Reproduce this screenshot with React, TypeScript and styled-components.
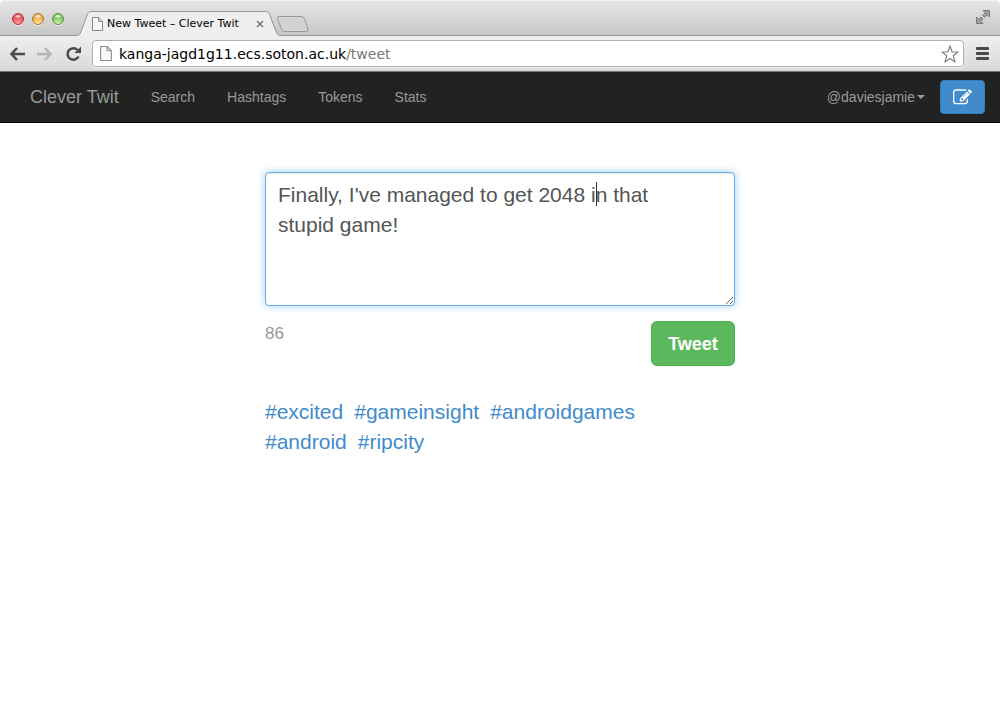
import React, { useState } from "react";
import styled, { createGlobalStyle } from "styled-components";

const GlobalStyle = createGlobalStyle`
  *, *::before, *::after { box-sizing: border-box; }
  body {
    margin: 0;
    background: #fff;
    color: #333;
    font-family: "Liberation Sans", Arial, sans-serif;
    font-size: 14px;
    line-height: 20px;
  }
  svg { display: block; flex: none; }
`;

const Chrome = styled.header`
  font-family: "DejaVu Sans", "Lucida Grande", sans-serif;
  color: #000;
`;

const TabStrip = styled.div`
  display: flex;
  align-items: flex-end;
  height: 36px;
  padding: 0 9px 0 12px;
  border-radius: 5px 5px 0 0;
  border-top: 1px solid #f2f2f2;
  background: linear-gradient(#e6e6e6, #c5c5c5);
  box-shadow: inset 0 -1px #979797;
`;

const Lights = styled.div`
  display: flex;
  gap: 8px;
  align-self: center;
  padding-top: 1px;
`;

const Light = styled.button<{ $edge: string; $fill: string; $glow: string }>`
  width: 12px;
  height: 12px;
  padding: 0;
  border: 1px solid ${(p) => p.$edge};
  border-radius: 50%;
  background:
    radial-gradient(ellipse 4px 2px at 50% 22%, #fff, transparent),
    radial-gradient(circle at 50% 95%, ${(p) => p.$glow}, ${(p) => p.$fill} 75%);
  box-shadow: 0 1px #f0f0f0;
`;

const Tab = styled.div`
  position: relative;
  display: flex;
  align-items: center;
  width: 204px;
  height: 25px;
  margin-left: 12px;
  padding: 0 16px;
  font-size: 11px;
  line-height: 16px;
`;

const TabShape = styled.svg`
  position: absolute;
  inset: 0;
`;

const TabTitle = styled.span`
  position: relative;
  flex: 1;
  margin-left: 4px;
  white-space: nowrap;
`;

const Layer = styled.span`
  position: relative;
`;

const IconButton = styled.button`
  position: relative;
  display: flex;
  flex: none;
  align-items: center;
  justify-content: center;
  padding: 0;
  border: 0;
  background: none;
  color: #4c4c4c;
`;

const NewTab = styled(IconButton)`
  align-self: center;
  margin: 11px 0 0 -4px;
`;

const Expand = styled(IconButton)`
  align-self: center;
  margin: 0 0 4px auto;
`;

const Toolbar = styled.div`
  display: flex;
  align-items: center;
  height: 36px;
  padding: 0 10px 0 9px;
  border-bottom: 1px solid #747474;
  background: linear-gradient(#efefef, #d9d9d9);
`;

const NavButtons = styled.div`
  display: flex;
  gap: 12px;
  margin-right: 10px;
`;

const Omnibox = styled.div`
  display: flex;
  flex: 1;
  align-items: center;
  height: 27px;
  margin-right: 12px;
  padding: 0 4px 0 7px;
  border: 1px solid #b0b0b0;
  border-radius: 4px;
  background: #fff;
  box-shadow: 0 1px #f3f3f3;
`;

const Address = styled.a`
  flex: 1;
  margin-left: 7px;
  color: #777;
  font-size: 14px;
  line-height: 20px;
  text-decoration: none;
  b { color: #000; font-weight: 400; }
`;

const Navbar = styled.nav`
  display: flex;
  gap: 2px;
  align-items: center;
  min-height: 51px;
  padding: 0 15px;
  border-bottom: 1px solid #080808;
  background: #222;
`;

const NavLink = styled.a<{ $brand?: boolean }>`
  display: flex;
  align-items: center;
  padding: 15px;
  color: #999;
  font-size: ${(p) => (p.$brand ? 18 : 14)}px;
  line-height: 20px;
  text-decoration: none;
`;

const NavEnd = styled.div`
  display: flex;
  align-items: center;
  margin-left: auto;
`;

const Caret = styled.span`
  margin-left: 2px;
  border: 4px solid transparent;
  border-top-color: currentColor;
  border-bottom: 0;
`;

const Compose = styled.button`
  display: flex;
  align-items: center;
  justify-content: center;
  width: 45px;
  height: 34px;
  padding: 0;
  border: 1px solid #357ebd;
  border-radius: 4px;
  background: #428bca;
  color: #fff;
`;

const Main = styled.main`
  max-width: 470px;
  margin: 0 auto;
  padding: 49px 0 20px;
`;

const Field = styled.div`
  position: relative;
`;

const TweetBox = styled.textarea`
  display: block;
  width: 100%;
  height: 134px;
  padding: 7px 32px 5px 12px;
  border: 1px solid #66afe9;
  border-radius: 4px;
  outline: 0;
  background: #fff;
  box-shadow: inset 0 1px 1px rgba(0, 0, 0, 0.075), 0 0 8px rgba(102, 175, 233, 0.6);
  color: #555;
  font: 21px/30px "Liberation Sans", Arial, sans-serif;
  resize: vertical;
`;

const InsertionPoint = styled.span`
  position: absolute;
  top: 10px;
  left: 331px;
  width: 1px;
  height: 24px;
  background: #333;
`;

const Actions = styled.div`
  display: flex;
  align-items: flex-start;
  justify-content: space-between;
  margin-top: 15px;
`;

const Remaining = styled.output`
  color: #999;
  font-size: 17px;
  line-height: 26px;
`;

const TweetButton = styled.button`
  width: 84px;
  height: 45px;
  padding: 0;
  border: 1px solid #4cae4c;
  border-radius: 6px;
  background: #5cb85c;
  color: #fff;
  font: bold 18px/24px "Liberation Sans", Arial, sans-serif;
`;

const Suggestions = styled.div`
  display: flex;
  flex-wrap: wrap;
  column-gap: 11px;
  margin-top: 31px;
  padding-right: 32px;
`;

const Hashtag = styled.a`
  color: #428bca;
  font-size: 21px;
  line-height: 30px;
  text-decoration: none;
`;

const PageIcon = ({ width, height }: { width: number; height: number }) => (
  <svg width={width} height={height} viewBox="0 0 11 14" fill="#f8f8f8" stroke="#8a8a8a">
    <path d="M.5.5h6l4 4v9H.5zM6.5.5v4h4" />
  </svg>
);

const lights = [
  { name: "Close window", edge: "#a3383b", fill: "#e2434b", glow: "#ff9d9d" },
  { name: "Minimise window", edge: "#b07532", fill: "#f0a238", glow: "#ffe69a" },
  { name: "Zoom window", edge: "#5b8f47", fill: "#74bd58", glow: "#cff5a8" },
];

const sections = ["Search", "Hashtags", "Tokens", "Stats"];
const hashtags = ["excited", "gameinsight", "androidgames", "android", "ripcity"];

function BrowserChrome() {
  return (
    <Chrome>
      <TabStrip>
        <Lights>
          {lights.map((l) => (
            <Light key={l.name} aria-label={l.name} $edge={l.edge} $fill={l.fill} $glow={l.glow} />
          ))}
        </Lights>
        <Tab>
          <TabShape width="204" height="25" viewBox="0 0 204 25" aria-hidden="true">
            <path
              d="M0 25V24.500C3 24.500 4 23 5 20.500L11 4.500C12 1.500 13 .5 16 .5H189C192 .5 193 1.500 194 4.500L200 20.500C201 23 202 24.500 204 24.500V25Z"
              fill="#efefef"
            />
            <path
              d="M0 24.500C3 24.500 4 23 5 20.500L11 4.500C12 1.500 13 .5 16 .5H189C192 .5 193 1.500 194 4.500L200 20.500C201 23 202 24.500 204 24.500"
              fill="none"
              stroke="#979797"
            />
          </TabShape>
          <Layer>
            <PageIcon width={11} height={14} />
          </Layer>
          <TabTitle>New Tweet – Clever Twit</TabTitle>
          <IconButton aria-label="Close tab">
            <svg width="8" height="8" viewBox="0 0 8 8" stroke="#777" strokeWidth="1.5">
              <path d="M1 1l6 6M7 1l-6 6" />
            </svg>
          </IconButton>
        </Tab>
        <NewTab aria-label="New tab">
          <svg width="33" height="17" viewBox="0 0 33 17" fill="#d3d3d3" stroke="#999">
            <path d="M3 .5H25Q27.500 .5 28.500 3L32 13Q32.500 15.500 30 15.500H9Q6.500 15.500 5.500 13L1.500 3Q1 .5 3 .5Z" />
          </svg>
        </NewTab>
        <Expand aria-label="Enter full screen">
          <svg width="16" height="16" viewBox="0 0 16 16" fill="#a0a0a0" stroke="#7c7c7c">
            <path d="M8 1.500h6.500V8l-2.200-2.200-2.800 2.700-2-2 2.700-2.800zM8 14.500H1.500V8l2.200 2.200 2.300-2.200 2 2-2.200 2.300z" />
          </svg>
        </Expand>
      </TabStrip>
      <Toolbar>
        <NavButtons>
          <IconButton aria-label="Back">
            <svg width="16" height="16" viewBox="0 0 16 16" fill="none" stroke="#4a4a4a" strokeWidth="2.500">
              <path d="M8 2L2.500 8 8 14M2.500 8H16" />
            </svg>
          </IconButton>
          <IconButton aria-label="Forward">
            <svg width="16" height="16" viewBox="0 0 16 16" fill="none" stroke="#b5b5b5" strokeWidth="2.500">
              <path d="M8 2l5.500 6L8 14M13.500 8H0" />
            </svg>
          </IconButton>
          <IconButton aria-label="Reload">
            <svg width="17" height="16" viewBox="0 0 17 16" fill="none" stroke="#4a4a4a" strokeWidth="2.500">
              <path d="M13.500 10.500A5.750 5.750 0 1 1 12.500 4" />
              <path d="M16 .5V7H9.500Z" fill="#4a4a4a" stroke="none" />
            </svg>
          </IconButton>
        </NavButtons>
        <Omnibox>
          <PageIcon width={12} height={15} />
          <Address href="#tweet">
            <b>kanga-jagd1g11.ecs.soton.ac.uk</b>/tweet
          </Address>
          <IconButton aria-label="Bookmark this page">
            <svg width="18" height="18" viewBox="0 0 18 18" fill="#fff" stroke="#858585" strokeWidth="1.250" strokeLinejoin="round">
              <path d="M9 1l2 5.800 6 .2-4.700 3.800 1.700 6.200-5-3.500L4 17l1.700-6.200L1 7l6-.2z" />
            </svg>
          </IconButton>
        </Omnibox>
        <IconButton aria-label="Browser menu">
          <svg width="14" height="13" viewBox="0 0 14 13" fill="#4a4a4a">
            <rect y="0" width="13" height="3" rx="1" />
            <rect y="5" width="13" height="3" rx="1" />
            <rect y="10" width="13" height="3" rx="1" />
          </svg>
        </IconButton>
      </Toolbar>
    </Chrome>
  );
}

export default function App() {
  const [text, setText] = useState("Finally, I've managed to get 2048 in that stupid game!");
  return (
    <>
      <GlobalStyle />
      <BrowserChrome />
      <Navbar>
        <NavLink href="#home" $brand>
          Clever Twit
        </NavLink>
        {sections.map((s) => (
          <NavLink key={s} href={`#${s.toLowerCase()}`}>
            {s}
          </NavLink>
        ))}
        <NavEnd>
          <NavLink href="#account">
            @daviesjamie
            <Caret />
          </NavLink>
          <Compose aria-label="Compose tweet">
            <svg width="19" height="19" viewBox="0 0 1792 1792" fill="currentColor">
              <path d="M888 1184l116-116-152-152-116 116v56h96v96h56zm440-720q-16-16-33 1l-350 350q-17 17-1 33t33-1l350-350q17-17 1-33zm80 594v190q0 119-84.500 203.500t-203.500 84.500h-832q-119 0-203.500-84.500t-84.500-203.500v-832q0-119 84.500-203.500t203.500-84.500h832q63 0 117 25 15 7 18 23 3 17-9 29l-49 49q-14 14-32 8-23-6-45-6h-832q-66 0-113 47t-47 113v832q0 66 47 113t113 47h832q66 0 113-47t47-113v-126q0-13 9-22l64-64q15-15 35-7t20 29zm-96-738l288 288-672 672h-288v-288zm444 132l-92 92-288-288 92-92q28-28 68-28t68 28l152 152q28 28 28 68t-28 68z" />
            </svg>
          </Compose>
        </NavEnd>
      </Navbar>
      <Main>
        <Field>
          <TweetBox
            id="tweet"
            aria-label="Tweet text"
            value={text}
            onChange={(e) => setText(e.target.value)}
          />
          <InsertionPoint />
        </Field>
        <Actions>
          <Remaining htmlFor="tweet">{140 - text.length}</Remaining>
          <TweetButton>Tweet</TweetButton>
        </Actions>
        <Suggestions>
          {hashtags.map((h) => (
            <Hashtag key={h} href={`#${h}`}>
              #{h}
            </Hashtag>
          ))}
        </Suggestions>
      </Main>
    </>
  );
}
